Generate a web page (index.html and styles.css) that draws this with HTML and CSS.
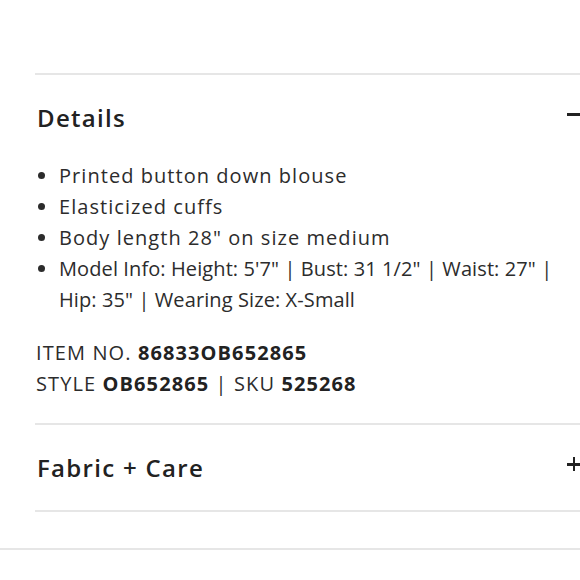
FILE: index.html
```html
<!DOCTYPE html>
<html>
<head>
<meta charset="utf-8">
<link rel="stylesheet" href="styles.css">
</head>
<body>
<div class="page">
  <div class="accordion">
    <section class="panel open">
      <div class="panel-head">
        <h2 class="panel-title">Details</h2>
        <span class="icon minus"></span>
      </div>
      <div class="panel-body">
        <ul class="bullets">
          <li>Printed button down blouse</li>
          <li>Elasticized cuffs</li>
          <li>Body length 28" on size medium</li>
          <li class="long">Model Info: Height: 5'7" | Bust: 31 1/2" | Waist: 27" | Hip: 35" | Wearing Size: X-Small</li>
        </ul>
        <div class="meta">
          <div>ITEM NO. <b>86833OB652865</b></div>
          <div>STYLE <b>OB652865</b> | SKU <b>525268</b></div>
        </div>
      </div>
    </section>
    <section class="panel">
      <div class="panel-head">
        <h2 class="panel-title">Fabric + Care</h2>
        <span class="icon plus"></span>
      </div>
    </section>
  </div>
  <div class="after"></div>
</div>
</body>
</html>
```
FILE: styles.css
```css
html, body {
  margin: 0;
  padding: 0;
  background: #fff;
  overflow: hidden;
}
body {
  width: 580px;
  height: 580px;
  font-family: "Open Sans", "DejaVu Sans", sans-serif;
  color: #2c2c2c;
}
.page {
  padding-top: 73px;
}
.accordion {
  margin-left: 35px;
  width: 555px;
  border-top: 2px solid #e6e6e6;
}
.panel {
  border-bottom: 2px solid #e6e6e6;
}
.panel-head {
  height: 85px;
  display: flex;
  align-items: center;
  justify-content: space-between;
  padding-left: 2px;
}
.panel-title {
  margin: 0;
  font-size: 24px;
  font-weight: 600;
  letter-spacing: 1.3px;
  color: #222;
}
.icon {
  position: relative;
  width: 14px;
  height: 14px;
  margin-right: 9px;
  margin-bottom: 7px;
}
.icon::before, .icon::after {
  content: "";
  position: absolute;
  background: #222;
}
.icon::before {
  left: 0;
  top: 6px;
  width: 14px;
  height: 2.5px;
}
.plus::after {
  left: 5.5px;
  top: 0;
  width: 2.5px;
  height: 14px;
}
.panel-body {
  padding: 0 0 24px 1px;
}
.bullets {
  margin: 0;
  padding: 0 0 0 23px;
  font-size: 20px;
  line-height: 31px;
  letter-spacing: 1.05px;
  width: 512px;
}
.bullets .long {
  letter-spacing: 0.1px;
}
.meta {
  margin-top: 22px;
  font-size: 20px;
  line-height: 31px;
  letter-spacing: 1.1px;
}
.meta b {
  font-weight: 700;
  color: #222;
}
.after {
  margin-top: 36px;
  border-top: 2px solid #e6e6e6;
}
```
